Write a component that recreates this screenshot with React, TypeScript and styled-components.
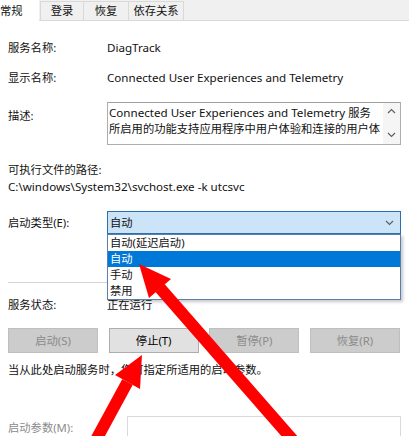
import React from "react";
import styled, { createGlobalStyle } from "styled-components";

const Global = createGlobalStyle`
  html, body { margin: 0; padding: 0; background: #ffffff; }
  body {
    font-family: "Noto Sans", "Noto Sans CJK SC", sans-serif;
    font-size: 11.3px;
    color: #000000;
  }
`;

const Root = styled.div`
  position: relative;
  width: 409px;
  height: 436px;
  overflow: hidden;
  background: #ffffff;
  font-family: "Noto Sans", "Noto Sans CJK SC", sans-serif;
  font-size: 11.3px;
  line-height: 16px;
  color: #111111;
`;

const Latin = styled.span`
  font-size: 11.6px;
`;

const TabStrip = styled.div`
  display: flex;
  align-items: flex-end;
  height: 21px;
  box-sizing: border-box;
  background: #f0f0f0;
  border-bottom: 1px solid #d9d9d9;
`;

const Tab = styled.div<{ $w: number; $active?: boolean }>`
  box-sizing: border-box;
  width: ${(p) => p.$w}px;
  height: ${(p) => (p.$active ? 21 : 19)}px;
  margin-bottom: ${(p) => (p.$active ? -1 : 0)}px;
  margin-right: ${(p) => (p.$active ? 1 : 0)}px;
  display: flex;
  align-items: center;
  justify-content: ${(p) => (p.$active ? "flex-start" : "center")};
  background: ${(p) => (p.$active ? "#ffffff" : "#f0f0f0")};
  border: ${(p) => (p.$active ? "none" : "1px solid #d9d9d9")};
  border-bottom: none;
  border-right: 0;
  white-space: nowrap;
  &:last-child {
    border-right: 1px solid #d9d9d9;
  }
`;

const Form = styled.div`
  display: flex;
  flex-direction: column;
  padding: 0 8px;
`;

const Row = styled.div<{ $mt: number; $h?: number; $top?: boolean }>`
  display: flex;
  align-items: ${(p) => (p.$top ? "flex-start" : "center")};
  margin-top: ${(p) => p.$mt}px;
  height: ${(p) => (p.$h ? `${p.$h}px` : "16px")};
  white-space: nowrap;
`;

const Label = styled.div<{ $w?: number; $mt?: number; $muted?: boolean }>`
  flex: none;
  width: ${(p) => p.$w ?? 99}px;
  margin-top: ${(p) => p.$mt ?? 0}px;
  color: ${(p) => (p.$muted ? "#8c8c8c" : "inherit")};
`;

const Value = styled.div`
  color: inherit;
`;

const DescBox = styled.div`
  box-sizing: border-box;
  display: flex;
  width: 294px;
  height: 43px;
  border: 1px solid #adadad;
  border-top-color: #a0a0a0;
`;

const DescText = styled.div`
  flex: 1;
  min-width: 0;
  height: 32px;
  margin: 2px 0 0 1px;
  overflow: hidden;
`;

const Line = styled.div`
  white-space: nowrap;
  overflow: hidden;
  height: 16px;
`;

const ScrollBar = styled.div`
  flex: none;
  width: 17px;
  display: flex;
  flex-direction: column;
  justify-content: space-between;
  align-items: center;
  padding: 5px 0 6px;
  background: #f5f5f5;
`;

const Combo = styled.div`
  box-sizing: border-box;
  width: 294px;
  height: 23px;
  border: 1px solid #2c6fb0;
  background: #cce4f7;
  display: flex;
  align-items: center;
  justify-content: space-between;
  padding: 0 6px 0 2px;
`;

const Separator = styled.div<{ $mt: number }>`
  margin-top: ${(p) => p.$mt}px;
  height: 1px;
  width: 393px;
  background: #d4d4d4;
`;

const ButtonRow = styled.div`
  display: grid;
  grid-template-columns: repeat(4, 90px);
  justify-content: space-between;
  width: 392px;
  margin-top: 15px;
`;

const Button = styled.div<{ $disabled?: boolean }>`
  box-sizing: border-box;
  height: 25px;
  display: flex;
  align-items: center;
  justify-content: center;
  border: 1px solid ${(p) => (p.$disabled ? "#bfbfbf" : "#adadad")};
  background: ${(p) => (p.$disabled ? "#cccccc" : "#e1e1e1")};
  color: ${(p) => (p.$disabled ? "#8a8a8a" : "#000000")};
`;

const Hint = styled.div`
  margin-top: 9px;
  white-space: nowrap;
`;

const InputBox = styled.div`
  box-sizing: border-box;
  width: 274px;
  height: 30px;
  border: 1px solid #d9d9d9;
  border-bottom: none;
  background: #ffffff;
`;

const DropList = styled.div`
  position: absolute;
  left: 107px;
  top: 234px;
  width: 294px;
  height: 66px;
  box-sizing: border-box;
  border: 1px solid #5b7fae;
  background: #ffffff;
  box-shadow: 2px 2px 3px rgba(0, 0, 0, 0.22);
  z-index: 2;
`;

const DropItem = styled.div<{ $sel?: boolean }>`
  height: 16px;
  line-height: 16px;
  padding-left: 2px;
  background: ${(p) => (p.$sel ? "#0078d7" : "transparent")};
  color: ${(p) => (p.$sel ? "#ffffff" : "#111111")};
  white-space: nowrap;
`;

const ArrowLayer = styled.svg`
  position: absolute;
  left: 0;
  top: 0;
  z-index: 3;
  pointer-events: none;
`;

const Chevron = ({ up }: { up?: boolean }) => (
  <svg width="9" height="6" viewBox="0 0 9 6">
    <path
      d={up ? "M1 5 L4.5 1.5 L8 5" : "M1 1 L4.5 4.5 L8 1"}
      fill="none"
      stroke="#606060"
      strokeWidth="1.2"
    />
  </svg>
);

export default function App() {
  return (
    <Root>
      <Global />
      <TabStrip>
        <Tab $w={39} $active>常规</Tab>
        <Tab $w={43}>登录</Tab>
        <Tab $w={45}>恢复</Tab>
        <Tab $w={56}>依存关系</Tab>
      </TabStrip>
      <Form>
        <Row $mt={19}>
          <Label>服务名称:</Label>
          <Value><Latin>DiagTrack</Latin></Value>
        </Row>
        <Row $mt={14}>
          <Label>显示名称:</Label>
          <Value><Latin>Connected User Experiences and Telemetry</Latin></Value>
        </Row>
        <Row $mt={16} $h={43} $top>
          <Label $mt={6}>描述:</Label>
          <DescBox>
            <DescText>
              <Line><Latin>Connected User Experiences and Telemetry</Latin> 服务</Line>
              <Line>所启用的功能支持应用程序中用户体验和连接的用户体</Line>
            </DescText>
            <ScrollBar>
              <Chevron up />
              <Chevron />
            </ScrollBar>
          </DescBox>
        </Row>
        <Row $mt={17}>
          <Value>可执行文件的路径:</Value>
        </Row>
        <Row $mt={1}>
          <Value><Latin>C:\windows\System32\svchost.exe -k utcsvc</Latin></Value>
        </Row>
        <Row $mt={16} $h={23}>
          <Label>启动类型(E):</Label>
          <Combo>
            <span>自动</span>
            <Chevron />
          </Combo>
        </Row>
        <Separator $mt={48} />
        <Row $mt={14}>
          <Label>服务状态:</Label>
          <Value>正在运行</Value>
        </Row>
        <ButtonRow>
          <Button $disabled>启动(S)</Button>
          <Button>停止(T)</Button>
          <Button $disabled>暂停(P)</Button>
          <Button $disabled>恢复(R)</Button>
        </ButtonRow>
        <Hint>当从此处启动服务时，您可指定所适用的启动参数。</Hint>
        <Row $mt={38} $h={30} $top>
          <Label $w={119} $mt={4} $muted>启动参数(M):</Label>
          <InputBox />
        </Row>
      </Form>

      <DropList>
        <DropItem>自动(延迟启动)</DropItem>
        <DropItem $sel>自动</DropItem>
        <DropItem>手动</DropItem>
        <DropItem>禁用</DropItem>
      </DropList>

      <ArrowLayer width="409" height="436" viewBox="0 0 409 436">
        <line x1="160" y1="288" x2="312" y2="462" stroke="#ff0000" strokeWidth="12" />
        <polygon points="139,264 171,279 149,298" fill="#ff0000" />
        <line x1="127.5" y1="382" x2="84" y2="462" stroke="#ff0000" strokeWidth="12" />
        <polygon points="142,355 140,389 115,375" fill="#ff0000" />
      </ArrowLayer>
    </Root>
  );
}
